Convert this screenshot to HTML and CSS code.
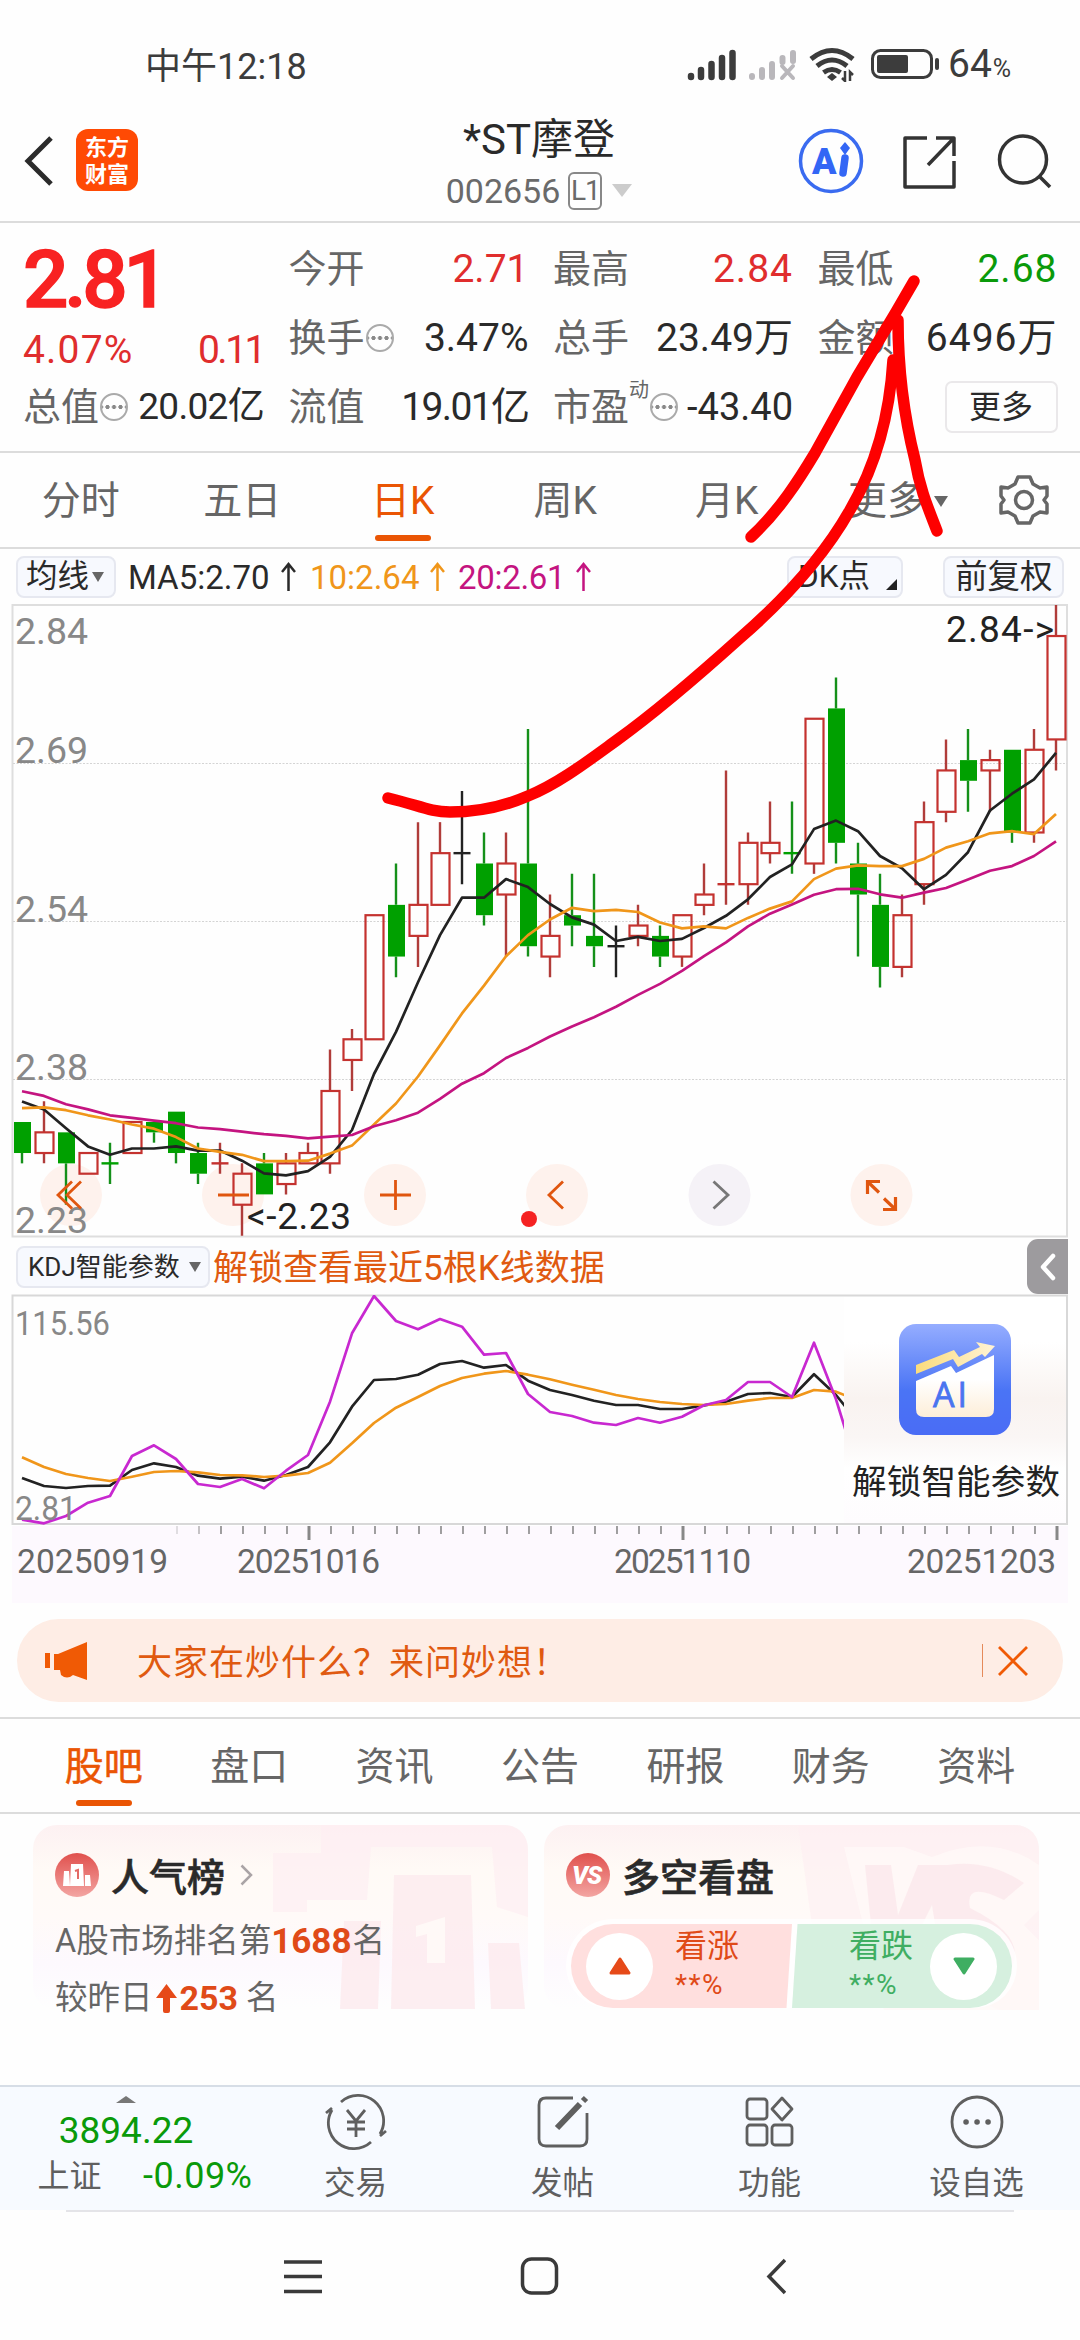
FILE: index.html
```html
<!DOCTYPE html>
<html lang="zh-CN">
<head>
<meta charset="utf-8">
<title>*ST摩登 002656</title>
<link rel="stylesheet" href="styles.css">
</head>
<body>
<div class="screen">
  <header class="status">
    <span class="clock">中午12:18</span>
    <svg class="status-icons" width="256" height="36" viewBox="685 46 256 36">
      <g stroke="#3c3c3c" stroke-width="6.5" stroke-linecap="round">
        <path d="M690 76v1M700 70v7M710.500 64v13M721 58v19M731.500 53v24"/>
      </g>
      <g stroke="#b9b7bb" stroke-width="6" stroke-linecap="round">
        <path d="M751 76v1M761 70v7M771 64v13M781.500 58v4M792 53v8"/>
        <path d="M781 66l11 12M792 66l-11 12" stroke-width="4"/>
      </g>
      <g fill="none" stroke="#3c3c3c" stroke-width="5">
        <path d="M810 59q21-17 42 0M816 66q15-12 30 0M822.500 72.500q8.500-6 17 0"/>
        <path d="M831 73l5 4-5 4-5-4z" fill="#3c3c3c" stroke="none"/>
        <path d="M844 71v10l-3-3M849 81v-9l3 3" stroke-width="2.500"/>
      </g>
      <rect x="871.500" y="50.500" width="59" height="27" rx="8" fill="none" stroke="#3c3c3c" stroke-width="3"/>
      <rect x="876" y="55" width="31" height="18" rx="2" fill="#3c3c3c"/>
      <path d="M936 60v8" stroke="#3c3c3c" stroke-width="4" stroke-linecap="round"/>
    </svg>
    <span class="battery">64<small>%</small></span>
  </header>

  <nav class="topbar">
    <svg class="back" width="32" height="54" viewBox="0 0 32 54"><path d="M27 4L4 27l23 23" fill="none" stroke="#2b2b2b" stroke-width="5"/></svg>
    <div class="logo">东方<br>财富</div>
    <div class="title">
      <h1>*ST摩登</h1>
      <div class="code"><span>002656</span><span class="lv">L1</span><i class="tri light"></i></div>
    </div>
    <svg class="tools" width="256" height="66" viewBox="796 127 256 66" fill="none">
      <circle cx="831" cy="160" r="30.500" stroke="#3a6bf0" stroke-width="3.500"/>
      <text x="812" y="173" class="ai-mark">A</text>
      <path d="M845 157l-2 15" stroke="#3366f5" stroke-width="7.500" stroke-linecap="round"/>
      <path d="M845 141l5 6-5 7-5-7z" fill="#3366f5"/>
      <g stroke="#333" stroke-width="3.500" stroke-linejoin="round">
        <path d="M927 137h-22v49h49v-26M936 137h18v18M953 138l-25 26"/>
        <circle cx="1023" cy="158.500" r="23.500"/>
        <path d="M1039 175l11 11"/>
      </g>
    </svg>
  </nav>

  <section class="quote">
    <div class="price">
      <strong>2.81</strong>
      <p><span class="pct">4.07%</span><span class="chg">0.11</span></p>
    </div>
    <div class="cell"><label>今开</label><b class="up">2.71</b></div>
    <div class="cell"><label>最高</label><b class="up wide">2.84</b></div>
    <div class="cell"><label>最低</label><b class="down">2.68</b></div>
    <div class="cell"><label>换手</label><i class="dots"></i><b>3.47%</b></div>
    <div class="cell"><label>总手</label><b>23.49万</b></div>
    <div class="cell"><label>金额</label><b class="wide">6496万</b></div>
    <div class="cell tight"><label>总值</label><i class="dots"></i><b>20.02亿</b></div>
    <div class="cell"><label>流值</label><b class="narrow">19.01亿</b></div>
    <div class="cell tight"><label>市盈</label><sup>动</sup><i class="dots"></i><b class="wide">-43.40</b></div>
    <div class="cell"><button class="more">更多</button></div>
  </section>

  <nav class="periods">
    <span>分时</span><span>五日</span><span class="on">日K</span><span>周K</span><span>月K</span>
    <span class="last">更多<i class="tri"></i></span>
    <svg width="50" height="52" viewBox="-25 -26 50 52" fill="none" stroke="#666" stroke-width="3.500" stroke-linejoin="round">
      <path d="M-6-23H6L9-16l7 4 7-1v9l-3 4 3 4v9l-7-1-7 4-3 7H-6l-3-7-7-4-7 1v-9l3-4-3-4v-9l7 1 7-4z"/>
      <circle r="8.500"/>
    </svg>
  </nav>

  <div class="ma">
    <button class="chip avg">均线<i class="tri small"></i></button>
    <span class="m5">MA5:2.70<svg width="17" height="30" viewBox="0 0 17 30"><path d="M8.500 29V3M2 10l6.500-8 6.500 8"/></svg></span>
    <span class="m10">10:2.64<svg width="17" height="30" viewBox="0 0 17 30"><path d="M8.500 29V3M2 10l6.500-8 6.500 8"/></svg></span>
    <span class="m20">20:2.61<svg width="17" height="30" viewBox="0 0 17 30"><path d="M8.500 29V3M2 10l6.500-8 6.500 8"/></svg></span>
    <button class="chip dk">DK点<i class="corner"></i></button>
    <button class="chip adj">前复权</button>
  </div>

  <svg class="kchart" width="1080" height="636" viewBox="0 603 1080 636">
    <path d="M12.500 605H1067V1236.500H12.500z" fill="none" stroke="#dedede" stroke-width="2"/>
    <path d="M13 763.500H1067M13 921.500H1067M13 1079.500H1067" stroke="#d4d4d4" stroke-dasharray="2 1.500"/>
    <g fill="#fef2ed">
      <circle cx="71" cy="1195" r="31"/><circle cx="233" cy="1195" r="31"/><circle cx="395" cy="1195" r="31"/>
      <circle cx="557" cy="1195" r="31"/><circle cx="719.500" cy="1195" r="31" fill="#f5f2f7"/><circle cx="881.500" cy="1195" r="31"/>
    </g>
    <g id="candles"></g>
    <g id="averages"></g>
    <g class="scale">
      <text x="15" y="644">2.84</text><text x="15" y="763">2.69</text><text x="15" y="922">2.54</text>
      <text x="15" y="1080">2.38</text><text x="15" y="1233">2.23</text>
    </g>
    <g class="mark">
      <text x="946" y="642" textLength="108">2.84-&gt;</text>
      <text x="247" y="1229" textLength="104">&lt;-2.23</text>
    </g>
    <g fill="none" stroke="#e0560f" stroke-width="2.800">
      <path d="M72 1181.500L58 1195l14 13.500M81 1181.500L67 1195l14 13.500"/>
      <path d="M218 1195h31M380 1195h31M395.500 1180v30"/>
      <path d="M563 1181.500L549 1195l14 13.500"/>
      <path d="M713.500 1181.500l14.500 13.500-14.500 13.500" stroke="#777"/>
      <path d="M880 1181.500h-12.500v12.500M868 1182l11 10.500M883 1209.500h12.500V1197M895 1209l-11-10.500" stroke-width="3.200"/>
    </g>
    <circle cx="529" cy="1219" r="8" fill="#f52222"/>
  </svg>

  <div class="kdjbar">
    <button class="chip">KDJ智能参数<i class="tri small"></i></button>
    <span>解锁查看最近5根K线数据</span>
    <div class="fold"><svg width="16" height="28" viewBox="0 0 16 28"><path d="M13 3L3 14l10 11" fill="none" stroke="#fff" stroke-width="4.500" stroke-linecap="round" stroke-linejoin="round"/></svg></div>
  </div>

  <svg class="kdj" width="1080" height="309" viewBox="0 1294 1080 309">
    <defs>
      <clipPath id="plot"><rect x="13" y="1295" width="831" height="230"/></clipPath>
      <linearGradient id="blue" x2="0" y2="1"><stop offset="0" stop-color="#95adff"/><stop offset=".6" stop-color="#4a74f5"/><stop offset="1" stop-color="#4a6cf5"/></linearGradient>
      <linearGradient id="cream" x2="0" y2="1"><stop offset=".4" stop-color="#fff"/><stop offset="1" stop-color="#fdeed8"/></linearGradient>
      <linearGradient id="gold" x2="1" y2="0"><stop offset="0" stop-color="#fbdc7c"/><stop offset="1" stop-color="#fff3d5"/></linearGradient>
      <linearGradient id="haze" x2="0" y2="1"><stop offset=".2" stop-color="#fff"/><stop offset=".45" stop-color="#f9f3f0"/><stop offset=".62" stop-color="#faf6f5"/><stop offset=".76" stop-color="#fff"/><stop offset="1" stop-color="#fefcfe"/></linearGradient>
    </defs>
    <rect x="12" y="1526" width="1056" height="77" fill="#fdf9fe"/>
    <path d="M12.500 1295.500H1067V1524H12.500z" fill="none" stroke="#d8d8d8" stroke-width="2"/>
    <g id="kdj-lines" clip-path="url(#plot)"></g>
    <g class="scale small">
      <text x="15" y="1335" textLength="95" lengthAdjust="spacingAndGlyphs">115.56</text>
      <text x="15" y="1520" textLength="62" lengthAdjust="spacingAndGlyphs">2.81</text>
    </g>
    <g id="ticks" stroke="#888"></g>
    <g class="dates">
      <text x="17" y="1573" textLength="151">20250919</text>
      <text x="237" y="1573" textLength="143">20251016</text>
      <text x="614" y="1573" textLength="137">20251110</text>
      <text x="907" y="1573" textLength="149">20251203</text>
    </g>
    <rect x="844" y="1297" width="222" height="226" fill="url(#haze)"/>
    <rect x="899" y="1324" width="112" height="111" rx="17" fill="url(#blue)"/>
    <path d="M916 1381l35-15 5 7 38-18v54q0 8-8 8h-62q-8 0-8-8z" fill="url(#cream)"/>
    <path d="M916 1365l38-15 5 7 21-10-4-5 19 4-10 11-3-3-24 13-5-8-37 15z" fill="url(#gold)"/>
    <text x="933" y="1407" class="ai-tile">AI</text>
    <text x="852" y="1494" class="unlock" textLength="208">解锁智能参数</text>
  </svg>

  <div class="banner">
    <svg width="44" height="38" viewBox="0 0 44 38" fill="#f05a05"><path d="M0 11h5v15H0zM9 12h4L42 0v38l-14-5q-6 5-12 0l-1-5H9z"/></svg>
    <span>大家在炒什么？来问妙想！</span>
    <i class="bar"></i>
    <svg width="30" height="30" viewBox="0 0 30 30"><path d="M1 1l28 28M29 1L1 29" stroke="#f05a05" stroke-width="2.800"/></svg>
  </div>

  <nav class="sections">
    <span class="on">股吧</span><span>盘口</span><span>资讯</span><span>公告</span><span>研报</span><span>财务</span><span>资料</span>
  </nav>

  <section class="cards">
    <article class="card">
      <svg class="art" width="495" height="185" viewBox="0 0 495 185">
        <path d="M240 28h48V0h180q27 0 27 27v65l-31-10 -5-60H338l-4 53h-60v12h-34z" fill="#fdeef2" opacity=".7"/>
        <path d="M361 50h77l4 134h-84zM311 96h37l-3 88h-38zM455 118h31l6 66h-34z" fill="#fdebee" opacity=".85"/>
        <path d="M383 101l29-9v46h-18v-29l-11 3z" fill="#fff9f7"/>
      </svg>
      <h2>
        <svg width="44" height="44" viewBox="0 0 44 44"><defs><linearGradient id="rd" x2="0" y2="1"><stop stop-color="#e0504d"/><stop offset="1" stop-color="#f3a5a2"/></linearGradient></defs><circle cx="22" cy="22" r="22" fill="url(#rd)"/><path d="M9 18h5l1 15H8zM16 11h12l1 22H15zM30 22h5l1 11h-6z" fill="#fff"/><path d="M20 18l3-1v9" fill="none" stroke="#e36a66" stroke-width="2"/></svg>
        人气榜
        <svg class="chev" width="13" height="22" viewBox="0 0 13 22"><path d="M1.500 1.500L11 11l-9.500 9.500" fill="none" stroke="#aaa4a6" stroke-width="2.500"/></svg>
      </h2>
      <p>A股市场排名第<em class="rank">1688</em>名</p>
      <p>较昨日<svg class="rise" width="23" height="31" viewBox="0 0 23 31"><path d="M11.500 1L22 15h-7v13q0 2-2 2h-3q-2 0-2-2V15H1z" fill="#e64a19"/></svg><em>253</em> 名</p>
    </article>
    <article class="card">
      <svg class="art" width="495" height="185" viewBox="0 0 495 185">
        <path d="M254 0h214q27 0 27 27v158h-40L300 110l-32-10z" fill="#fdeff2" opacity=".7"/>
        <path d="M300 22h60l28 10q60-25 107 8v45l-15 15 15 15v70H340z" fill="#fff9f7" opacity=".8"/>
        <path d="M321 40h26l7 50 20-50h30q40-6 76 18l-20 17q-40-20-34 8 60 30 40 62l-70-15-8-50-15 30h-45z" fill="#fce9ec" opacity=".85"/>
      </svg>
      <h2>
        <svg width="44" height="44" viewBox="0 0 44 44"><circle cx="22" cy="22" r="22" fill="url(#rd)"/><text x="6" y="31" class="vs">VS</text></svg>
        多空看盘
      </h2>
      <div class="vote">
        <div class="bull"><i class="disc"><svg width="22" height="18" viewBox="0 0 22 18"><path d="M11 2L20 16H2z" fill="#e64a19" stroke="#e64a19" stroke-width="3" stroke-linejoin="round"/></svg></i><p>看涨<small>**%</small></p></div>
        <div class="bear"><p>看跌<small>**%</small></p><i class="disc"><svg width="22" height="18" viewBox="0 0 22 18"><path d="M11 16L20 2H2z" fill="#3fae62" stroke="#3fae62" stroke-width="3" stroke-linejoin="round"/></svg></i></div>
      </div>
    </article>
  </section>

  <footer class="dock">
    <div class="index"><i class="tri up"></i><b>3894.22</b><p><span>上证</span><span class="down">-0.09%</span></p></div>
    <div class="item"><svg width="62" height="56" viewBox="-31 -28 62 56"><path d="M-15-20A25.500 25.500 0 0 1 24 12M15 20A25.500 25.500 0 0 1-24-12M24 14l6-5M-24-14l-6 5M-9-12L0-1 9-12M0-1v16M-9 0H9M-9 7H9"/></svg>交易</div>
    <div class="item"><svg width="62" height="56" viewBox="-31 -28 62 56"><path d="M10-24h-27q-7 0-7 7v34q0 7 7 7h34q7 0 7-7V-9"/><path d="M-6 6L17-18M20-21l3-3" stroke-width="6"/></svg>发帖</div>
    <div class="item"><svg width="62" height="56" viewBox="-31 -28 62 56"><rect x="-23" y="-23" width="20" height="20" rx="3"/><path d="M12-24l10 11-10 11L2-13z" stroke-linejoin="round"/><rect x="-23" y="3" width="20" height="20" rx="3"/><rect x="2" y="3" width="20" height="20" rx="3"/></svg>功能</div>
    <div class="item"><svg width="62" height="56" viewBox="-31 -28 62 56"><circle r="25"/><path d="M-11 0h.1M0 0h.1M11 0h.1" stroke-width="5.500" stroke-linecap="round"/></svg>设自选</div>
  </footer>
  <div class="sysnav">
    <svg width="502" height="38" viewBox="284 2256 502 38" fill="none" stroke="#3a3a3a" stroke-width="3.500">
      <path d="M284 2261h38M284 2275.500h38M284 2290.500h38"/>
      <rect x="522.500" y="2258" width="34" height="34" rx="9"/>
      <path d="M785 2259l-16 16.500 16 16.500"/>
    </svg>
  </div>

  <svg class="ink" width="1080" height="900" viewBox="0 0 1080 900" fill="none" stroke="#fe0000" stroke-linecap="round" stroke-linejoin="round" stroke-width="11.500">
    <path d="M388 798C418 805 430 812 450 812C480 812 505 806 528 796C558 784 588 761 617 740C660 709 700 674 740 638C785 599 824 556 850 510C878 462 890 410 893 360"/>
    <path d="M751 537C780 510 800 478 815 453L857 377L896 312L914 281M898 320C898 375 905 420 915 460C920 490 929 510 937 531"/>
  </svg>
</div>
<script src="chart.js"></script>
</body>
</html>
```
FILE: styles.css
```css
* { box-sizing: border-box; margin: 0; padding: 0; }
body { background: #fefefe; font-family: Roboto, "Noto Sans CJK SC", sans-serif; color: #2a2a2a; }
i, em { font-style: normal; }
button { font: inherit; color: inherit; background: none; border: 0; white-space: nowrap; }
svg { flex: none; display: block; }
.screen { position: relative; width: 1080px; height: 2340px; overflow: hidden; display: flex; flex-direction: column; }
.screen > * { flex: none; }

.tri { display: inline-block; border: 7px solid transparent; border-top: 11px solid #666; border-bottom: 0; }
.tri.small { border-width: 10px 6.5px 0; }
.tri.light { border-width: 13px 10px 0; border-top-color: #ccc; }
.tri.up { border-width: 0 10px 7px; border-bottom: 7px solid #777; }
.up { color: #e02d2d; }
.down { color: #0a9a0a; }

.status { height: 98px; padding: 29px 0 0 145px; display: flex; align-items: center; font-size: 36px; color: #3c3c3c; }
.clock { width: 541px; margin-top: -2px; }
.status-icons { margin-right: 6px; }
.battery { font-size: 39px; }
.battery small { font-size: 25px; margin-left: 1px; }

.topbar { height: 125px; border-bottom: 2px solid #dcdcdc; display: flex; align-items: center; padding: 0 0 0 24px; }
.back { margin-top: 2px; }
.logo { margin-left: 20px; width: 62px; height: 62px; border-radius: 12px; background: #ff4a04; color: #fff; font: bold 22px/27px "Noto Sans CJK SC", sans-serif; text-align: center; padding-top: 3px; }
.title { flex: 1; display: flex; flex-direction: column; align-items: center; padding-left: 144px; }
.title h1 { font-weight: 400; font-size: 42px; line-height: 54px; margin-top: 6px; }
.code { display: flex; align-items: center; height: 44px; font-size: 34px; color: #6a6a6a; margin-top: 2px; }
.lv { margin: 0 10px 0 8px; width: 34px; height: 38px; border: 2px solid #888; border-radius: 6px; font-size: 28px; line-height: 34px; text-align: center; letter-spacing: -1px; }
.tools { margin: 2px 28px 0 0; }
.ai-mark { font: 900 36px Roboto, sans-serif; fill: #3366f5; }

.quote { height: 230px; border-bottom: 2px solid #dcdcdc; padding: 11px 22px 0 23px; display: grid; grid-template-columns: 241px 240px 240px 240px; grid-template-rows: repeat(3, 69px); column-gap: 24.500px; }
.price { grid-row: span 2; color: #e02d2d; }
.price strong { display: block; font-weight: 500; font-size: 80px; line-height: 80px; letter-spacing: -4.200px; padding-top: 6px; color: #f82222; -webkit-text-stroke: 1.500px #f82222; }
.price p { display: flex; justify-content: space-between; font-size: 39px; line-height: 56px; padding-top: 2px; }
.pct { letter-spacing: 1.200px; }
.chg { letter-spacing: -2.500px; }
.cell { display: flex; align-items: center; white-space: nowrap; line-height: 56px; }
.cell label { font-size: 38px; color: #666; }
.cell b { margin-left: auto; font-weight: 400; font-size: 39px; }
.cell b.down, .cell b.wide { letter-spacing: 1px; }
.cell b.narrow { letter-spacing: -1.600px; }
.cell.tight b { font-size: 37px; letter-spacing: -.7px; }
.cell.tight b.wide { font-size: 38px; letter-spacing: 0; }
.cell sup { font-size: 20px; color: #666; align-self: flex-start; line-height: 36px; }
.dots { width: 28px; height: 28px; border: 2.500px solid #aaa; border-radius: 50%; margin-left: 1px; flex: none; background: radial-gradient(circle, #888 1.800px, transparent 2.300px) 50% 50% / 6.500px 24px repeat-x; }
.more { margin-left: auto; width: 113px; height: 52px; border: 2px solid #eae8ea; border-radius: 7px; font-size: 32px; line-height: 46px; }

.periods { height: 96px; border-bottom: 2px solid #dcdcdc; display: flex; align-items: center; font-size: 39px; color: #666; }
.periods span { width: 161.500px; height: 94px; line-height: 96px; text-align: center; position: relative; }
.periods .last { width: 191px; padding-right: 10px; }
.periods .last .tri { margin-left: 8px; vertical-align: 7px; }
.periods .on { left: -1px; }
.on { color: #ea5504 !important; position: relative; }
.on::after { content: ""; position: absolute; left: 50%; margin-left: -28px; bottom: 6px; width: 56px; height: 6px; border-radius: 3px; background: #ea5504; }

.ma { height: 54px; padding: 2px 16px 0; display: flex; align-items: center; font-size: 33px; }
.chip { height: 42px; border: 2px solid #e6e8f0; border-radius: 8px; background: #f7f9fe; padding: 0 9px; font-size: 31.500px; line-height: 38px; display: flex; align-items: center; }
.chip .tri { margin-left: 3px; }
.chip.avg { width: 100px; padding: 0 8px; }
.ma span { display: flex; align-items: center; }
.ma span svg { margin-left: 10px; fill: none; stroke: currentColor; stroke-width: 2.500; }
.m5 { width: 182px; margin-left: 12px; }
.m10 { width: 148px; color: #f0961a; }
.m20 { color: #c41480; letter-spacing: -.3px; }
.chip.dk { margin: 0 40px 0 auto; width: 116px; padding: 0 4px 0 9px; }
.chip.adj { width: 121px; padding: 0 10px; font-size: 32.500px; }
.corner { margin: 14px 0 0 auto; border-left: 11px solid transparent; border-bottom: 11px solid #222; }

.kchart, .kdj { overflow: visible; }
.scale { fill: #888; font-size: 37.500px; }
.scale.small { font-size: 34px; }
.mark { fill: #222; font-size: 37px; }
.dates { fill: #666; font-size: 33.500px; }
.kdjbar { position: relative; height: 55px; padding-left: 16px; display: flex; align-items: center; }
.kdjbar .chip { width: 194px; font-size: 26px; padding-left: 10px; }
.kdjbar .chip .tri { margin-left: 9px; }
.kdjbar span { margin: -4px 0 0 3px; font-size: 35px; color: #e05a10; }
.fold { margin: 0 12px 0 auto; width: 41px; height: 55px; background: #9d9b9e; border-radius: 11px 0 0 11px; display: flex; align-items: center; justify-content: center; }
.ai-tile { font: 500 34px "Open Sans", sans-serif; fill: #4a74f0; stroke: #4a74f0; stroke-width: .8px; letter-spacing: 3px; }
.unlock { font-size: 34.500px; fill: #222; }

.banner { margin: 16px 17px 0; height: 83px; border-radius: 42px; background: #feede5; padding: 0 35px 0 28px; display: flex; align-items: center; color: #e05a10; font-size: 35px; letter-spacing: 1px; }
.banner span { margin: -2px 0 0 48px; flex: 1; }
.bar { width: 1.500px; height: 33px; background: #e58a5a; margin-right: 15px; }

.sections { margin-top: 15px; height: 97px; border: solid #dcdcdc; border-width: 2px 0; padding: 0 31px; display: flex; font-size: 39px; color: #666; }
.sections span { flex: 1; text-align: center; line-height: 96px; }
.sections .on { -webkit-text-stroke: .5px #ea5504; }

.cards { margin-top: 11px; height: 260px; padding-left: 33px; display: flex; gap: 16px; }
.card { position: relative; width: 495px; height: 185px; border-radius: 24px; padding: 28px 22px; background: linear-gradient(#fdf1f2, #fffaf6 24%, #fffaf8 50%, #fdf9fe 75%, #fefefe); }
.art { position: absolute; left: 0; top: 0; }
.card h2 { position: relative; display: flex; align-items: center; font: 500 38px/44px "Noto Sans CJK SC", sans-serif; gap: 12px; color: #2a2a2a; -webkit-text-stroke: .6px #2a2a2a; }
.chev { margin-left: 3px; }
.card p { position: relative; display: flex; align-items: center; font-size: 32.500px; line-height: 57px; color: #666; white-space: pre; }
.card h2 + p { margin-top: 16px; }
.card em { color: #e04a18; font-weight: 700; font-size: 34px; }
.card .rank { font-size: 35px; margin-right: 1px; }
.rise { margin: 0 2px; }
.vs { font: italic 900 25px Roboto, sans-serif; fill: #fff; letter-spacing: -1px; }
.vote { position: relative; margin: 27px -27px 0 5px; width: 441px; height: 84px; display: flex; }
.vote::before { content: ""; position: absolute; inset: -5px -5px 0; background: #fffc; border-radius: 47px 47px 42px 42px; }
.vote > div { position: relative; height: 84px; display: flex; align-items: center; }
.bull { width: 221px; background: #ffdfde; border-radius: 42px 0 0 42px; clip-path: polygon(0 0, 100% 0, 97.500% 100%, 0 100%); padding-left: 15px; gap: 22px; }
.bear { width: 220px; background: #d6f0df; border-radius: 0 42px 42px 0; clip-path: polygon(2.500% 0, 100% 0, 100% 100%, 0 100%); justify-content: flex-end; padding-right: 15px; gap: 17px; }
.disc { width: 67px; height: 67px; border-radius: 50%; background: #fff; display: flex; align-items: center; justify-content: center; }
.card .vote p { display: block; font-size: 32px; line-height: 42px; color: #e04a18; margin-top: -5px; }
.card .bear p { color: #3fae62; }
.vote small { display: block; font-size: 28px; line-height: 35px; letter-spacing: 1.500px; }

.dock { height: 125px; border-top: 2px solid #d6dde6; background: #f7faff; display: flex; color: #5f5f5f; }
.index { width: 252px; padding-top: 9px; display: flex; flex-direction: column; align-items: center; color: #0a9a0a; }
.index b { font-weight: 400; font-size: 37px; line-height: 50px; margin-top: 3px; }
.index p { display: flex; align-items: center; justify-content: space-between; padding-left: 38px; width: 253px; font-size: 36px; letter-spacing: .5px; line-height: 40px; margin-top: 0; }
.index p span:first-child { color: #5f5f5f; font-size: 32px; letter-spacing: 0; }
.item { width: 207px; display: flex; flex-direction: column; align-items: center; font-size: 31.500px; line-height: 46px; padding-top: 7px; gap: 11px; }
.item svg { fill: none; stroke: #5f5f5f; stroke-width: 2.800; }
.sysnav { margin: 0 66px; border-top: 2px solid #e4e4e8; height: 129px; display: flex; align-items: center; padding-left: 218px; }

.ink { position: absolute; left: 0; top: 0; pointer-events: none; }
```
FILE: chart.js
```js
const STEP = 22, X0 = 22, TOP = 605, TICK = 10.34;
const NS = "http://www.w3.org/2000/svg";

function add(parent, tag, attrs) {
  const el = document.createElementNS(NS, tag);
  for (const k in attrs) el.setAttribute(k, attrs[k]);
  document.getElementById(parent).appendChild(el);
}

// colour, body top, body bottom, high, low: in cents below 2.84
const days = `g50,53,50,54 r51,53,48,54 g51,54,51,58 r53,55,53,55 g54,54,52,56 r50,53,50,53
g50,51,50,52 g49,53,49,54 g53,55,52,56 r54,54,52,55 r55,58,54,61 g54,57,53,57 r54,56,53,57
r53,54,52,54 r47,54,43,55 r42,44,41,47 r30,42,30,42 g29,34,25,36 r29,32,21,35 r24,29,21,29
k24,24,18,27 g25,30,22,31 r25,28,22,34 g25,33,12,34 r32,34,28,36 g30,31,26,33 g32,33,26,35
k33,33,31,36 r31,32,29,33 g32,34,31,35 r30,34,30,35 r28,29,25,30 r27,27,16,29 r23,27,22,29
r23,24,19,25 g24,24,19,26 r11,25,11,26 g10,23,7,25 g25,28,23,34 g29,35,26,37 r30,35,28,36
r21,27,19,29 r16,20,13,21 g15,17,12,20 r15,16,14,20 g14,22,14,23 r14,22,12,23 r3,13,0,16`.split(/\s+/);
const ink = { g: "#00a000", r: "#c4322f", k: "#222" };

days.forEach((d, i) => {
  const [a, b, hi, lo] = d.slice(1).split(",").map(n => TOP + n * TICK);
  const c = ink[d[0]], x = X0 + i * STEP;
  const wick = d[0] === "r" ? "#b03c3a" : d[0] === "g" ? "#15901a" : c;
  add("candles", "path", { d: `M${x} ${hi}V${a}M${x} ${b}V${lo}`, stroke: wick, "stroke-width": 2.4 });
  if (a === b) add("candles", "path", { d: `M${x - 8.5} ${a}h17`, stroke: c, "stroke-width": 2.4 });
  else if (d[0] === "g") add("candles", "rect", { x: x - 8, y: a, width: 17, height: b - a, fill: c });
  else add("candles", "rect", { x: x - 8.5, y: a, width: 18, height: b - a, fill: "none", stroke: c, "stroke-width": 2.2 });
});

function line(group, values, color, toY) {
  const pts = values.map((v, i) => `${X0 + i * STEP},${toY(v).toFixed(1)}`).join(" ");
  add(group, "polyline", { points: pts, fill: "none", stroke: color, "stroke-width": 2.7, "stroke-linejoin": "round" });
}

const maY = v => 590 + v / 2.376;
line("averages", [1215,1234,1279,1322,1342,1327,1327,1322,1332,1332,1356,1386,1391,1381,1347,1283,1150,1050,932,820,731,731,687,706,746,778,795,834,824,834,829,803,774,735,682,652,568,548,573,632,661,711,677,623,524,484,450,387], "#222", maY);
line("averages", [1231,1229,1236,1248,1258,1270,1280,1300,1327,1335,1342,1357,1357,1356,1339,1320,1270,1220,1156,1082,1006,940,870,820,783,755,763,760,765,790,804,799,804,779,757,740,687,662,654,656,656,639,612,597,578,573,580,532], "#f0961a", maY);
line("averages", [1191,1202,1222,1234,1248,1254,1261,1267,1277,1281,1287,1293,1297,1303,1299,1295,1274,1260,1242,1209,1173,1148,1112,1088,1061,1037,1015,990,962,936,905,870,837,799,769,747,724,711,710,723,731,719,708,688,667,656,632,597], "#c41480", maY);

const kdjY = v => 1220 + v / 3;
line("kdj-lines", [774,798,804,798,797,750,730,741,767,776,770,782,765,741,667,560,480,477,464,432,423,443,435,482,510,525,542,555,555,567,567,556,545,522,519,531,463,525,606], "#222", kdjY);
line("kdj-lines", [712,741,762,774,783,770,756,753,757,765,766,771,767,759,728,670,609,563,531,498,474,461,453,464,478,494,509,525,537,546,552,555,552,542,534,534,510,515,541], "#f0961a", kdjY);
line("kdj-lines", [899,910,888,848,828,708,676,717,792,801,777,805,752,705,545,340,228,303,328,297,320,404,399,522,576,588,608,615,594,608,590,556,540,486,486,531,368,538,751], "#c828d0", kdjY);

for (let i = 7; i < 48; i++) {
  const major = [13, 30, 47].includes(i), x = X0 + i * STEP + 1;
  add("ticks", "path", { d: `M${x} 1526V${major ? 1540 : 1534}`, "stroke-width": major ? 3 : 1.6, opacity: i < 8 ? .3 : i < 9 ? .6 : 1 });
}
```
